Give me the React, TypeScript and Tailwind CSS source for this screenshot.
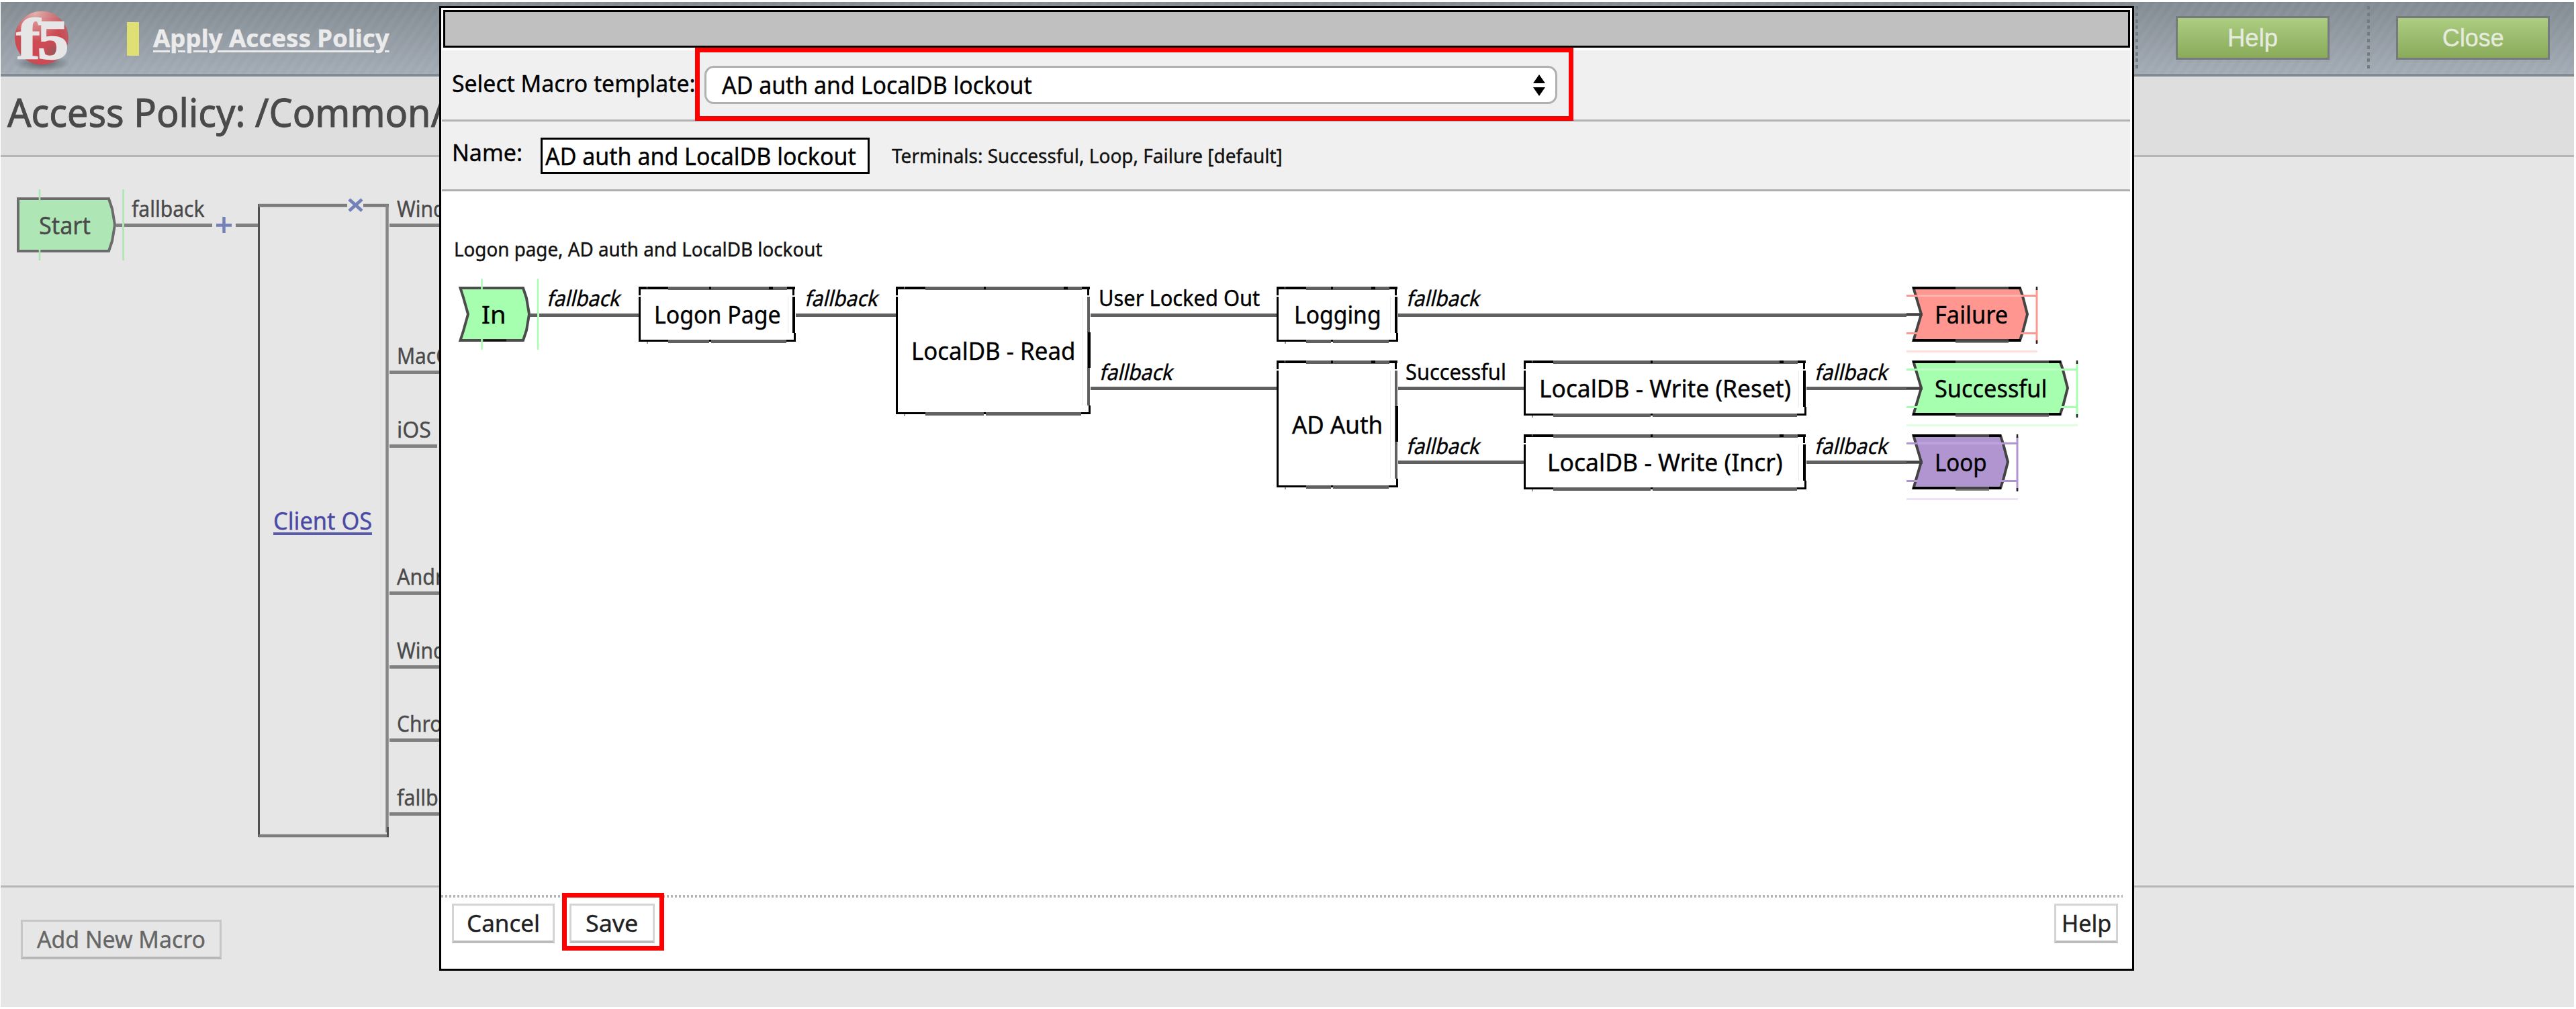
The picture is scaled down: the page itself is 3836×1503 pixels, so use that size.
import { useLayoutEffect, useRef, useState } from "react";
import type { ReactNode } from "react";

/* Text drawn in one line and condensed or stretched to the given width. */
function Fit({ w, children, oblique = false, className = "" }: { w: number; children: string; oblique?: boolean; className?: string }) {
  const ref = useRef<HTMLSpanElement>(null);
  const [scale, setScale] = useState(1);
  useLayoutEffect(() => {
    if (ref.current) setScale(w / ref.current.offsetWidth);
  }, [w, children]);
  return (
    <span className="inline-block whitespace-nowrap" style={{ width: w }}>
      <span
        ref={ref}
        className={`inline-block origin-[0_78%] ${className}`}
        style={{ transform: `scaleX(${scale})${oblique ? " skewX(-14deg)" : ""}` }}
      >
        {children}
      </span>
    </span>
  );
}

/* Label on a diagram canvas, placed by its left edge and baseline. */
function Label({ x, b, w, children, oblique }: { x: number; b: number; w: number; children: string; oblique?: boolean }) {
  return (
    <div className="absolute text-[32px] leading-[40px]" style={{ left: x, top: b - 32 }}>
      <Fit w={w} oblique={oblique}>{children}</Fit>
    </div>
  );
}

function Wire({ x, y, w }: { x: number; y: number; w: number }) {
  return <div className="absolute h-[5px] bg-[#606060]" style={{ left: x, top: y - 2.5, width: w }} />;
}

function BoxNode({ x, y, w, h, tw, children }: { x: number; y: number; w: number; h: number; tw: number; children: string }) {
  const mid = Math.round(w * 0.45);
  const tall = h > 120;
  return (
    <div className="absolute flex items-center justify-center bg-white pt-[2px] text-[36px] leading-[48px]" style={{ left: x, top: y, width: w, height: h }}>
      <svg className="absolute left-0 top-0 overflow-visible" width={w} height={h} shapeRendering="crispEdges">
        <rect x={0} y={0} width={3} height={h} fill="#000" />
        <rect x={0} y={0} width={w - 1} height={4} fill="#000" />
        <rect x={44} y={0} width={w - 57} height={5} fill="#606060" />
        <rect x={mid} y={0} width={3} height={4} fill="#000" />
        <rect x={w - 40} y={0} width={6} height={4} fill="#000" />
        <rect x={12} y={0} width={1} height={3} fill="#aaa" />
        <rect x={0} y={h - 3} width={w} height={3} fill="#000" />
        <rect x={44} y={h - 3} width={w - 58} height={5} fill="#606060" />
        <rect x={mid} y={h - 3} width={3} height={3} fill="#000" />
        <rect x={mid} y={h} width={3} height={2} fill="#fff" />
        <rect x={12} y={h} width={2} height={3} fill="#999" />
        <rect x={w - 5} y={0} width={3} height={13} fill="#000" />
        <rect x={w - 5} y={15} width={4} height={h - 28} fill={tall ? "#606060" : "#000"} />
        {tall && <rect x={w - 4} y={68} width={4} height={53} fill="#000" />}
        <rect x={w - 3} y={h - 13} width={3} height={13} fill="#000" />
        <rect x={0} y={13} width={3} height={2} fill="#fff" />
        <rect x={w - 12} y={15} width={1} height={h - 28} fill="#e8e8e8" />
      </svg>
      <Fit w={tw}>{children}</Fit>
    </div>
  );
}

function Ending({ x, y, w, tw, fill, soft, light, children }: { x: number; y: number; w: number; tw: number; fill: string; soft: string; light: string; children: string }) {
  const r = w - 12;
  return (
    <div className="absolute flex h-[82px] items-center pl-[33px] pt-[2px] text-[36px] leading-[48px]" style={{ left: x, top: y, width: w }}>
      <svg className="absolute left-0 top-0 overflow-visible" width={w} height={82}>
        <path d={`M1.5 2 H${r - 1} L${r + 3} 14 L${w - 2} 41 L${r + 3} 68 L${r - 1} 80 H1.5 L5 68 L13 41 L5 14 Z`} fill={fill} stroke="#444" strokeWidth={4} />
        <path d={`M0 2 H64 M${r - 18} 2 H${r} M0 80 H64 M${r - 18} 80 H${r}`} stroke="#000" strokeWidth={4} />
        <path d={`M64 83 H${r - 18}`} stroke="#888" strokeWidth={2} />
        <path d={`M-9 13.500 H${w + 13} M-9 69.500 H${w + 13} M${w + 12} 3 V84`} stroke={fill} strokeWidth={3} />
        <path d={`M8 13.500 H${w - 10}`} stroke={light} strokeWidth={3} />
        <path d={`M-9 96.500 H${w + 13}`} stroke={soft} strokeWidth={3} />
        <path d={`M${w + 12} 0 V5 M${w + 12} 80 V85`} stroke="#222" strokeWidth={2.5} />
        <path d="M-9 41.500 H15" stroke="#444" strokeWidth={4.5} />
      </svg>
      <span className="relative flex">
        <Fit w={tw}>{children}</Fit>
      </span>
    </div>
  );
}

function GreyButton({ children, className }: { children: ReactNode; className: string }) {
  return (
    <button className={`flex h-[59px] shrink-0 items-center justify-center border-[3px] border-b-4 text-[35px] leading-[48px] ${className}`}>
      {children}
    </button>
  );
}

function HeaderButton({ w, children }: { w: number; children: string }) {
  return (
    <button className="flex h-[65px] w-[229px] items-center justify-center border-[3px] border-[#777a7c] bg-linear-to-b from-[#adcd82] to-[#89ab59] font-['Liberation_Sans',sans-serif] text-[37px] leading-[44px] text-[#e6ebdf]">
      <Fit w={w}>{children}</Fit>
    </button>
  );
}

function DottedRule() {
  return <div className="h-[96px] w-[4px] bg-[repeating-linear-gradient(180deg,#737b83_0_5px,transparent_5px_9.8px)]" />;
}

function Logo() {
  return (
    <svg className="h-[104px] w-[90px] overflow-visible" viewBox="0 0 90 104">
      <defs>
        <radialGradient id="ball" cx="0.45" cy="0.55" r="0.6">
          <stop offset="0" stopColor="#cf4a55" />
          <stop offset="0.7" stopColor="#cb4a54" />
          <stop offset="1" stopColor="#b8636a" />
        </radialGradient>
        <radialGradient id="gloss" cx="0.38" cy="0.02" r="0.55">
          <stop offset="0" stopColor="#e2b5b0" />
          <stop offset="0.5" stopColor="#dba09f" stopOpacity="0.6" />
          <stop offset="1" stopColor="#dba6a5" stopOpacity="0" />
        </radialGradient>
        <radialGradient id="dim">
          <stop offset="0" stopColor="#8c5a5c" stopOpacity="0.8" />
          <stop offset="1" stopColor="#8c5a5c" stopOpacity="0" />
        </radialGradient>
        <radialGradient id="shade">
          <stop offset="0" stopColor="#555b62" stopOpacity="0.9" />
          <stop offset="1" stopColor="#555b62" stopOpacity="0" />
        </radialGradient>
      </defs>
      <ellipse cx="45" cy="91" rx="42" ry="12" fill="url(#shade)" />
      <circle cx="44" cy="53.500" r="40" fill="url(#ball)" />
      <circle cx="44" cy="53.500" r="40" fill="url(#gloss)" />
      <ellipse cx="62" cy="74" rx="16" ry="13" fill="url(#dim)" />
      <g fill="#e7e6e6" stroke="#e7e6e6" className="font-['Liberation_Serif',serif] font-bold">
        <text x="6" y="85" fontSize="86" strokeWidth="1.5" textLength="36" lengthAdjust="spacingAndGlyphs">f</text>
        <text x="38" y="84" fontSize="82" strokeWidth="2.500" textLength="46" lengthAdjust="spacingAndGlyphs">5</text>
      </g>
    </svg>
  );
}

const branches = [
  { name: "Windows", h: "h-[103.5px]", w: 128, line: "w-[77px]" },
  { name: "MacOS", h: "h-[219.5px]", w: 98, line: "w-[77px]" },
  { name: "iOS", h: "h-[109.5px]", w: 51, line: "w-[71px]" },
  { name: "Android", h: "h-[219.5px]", w: 114, line: "w-[77px]" },
  { name: "Windows", h: "h-[109.5px]", w: 128, line: "w-[77px]" },
  { name: "Chrome OS", h: "h-[109.5px]", w: 160, line: "w-[77px]" },
  { name: "fallback", h: "h-[110px]", w: 110, line: "w-[77px]" },
];

/* Policy diagram behind the dialog. */
function PolicyCanvas() {
  return (
    <div className="relative flex text-[#4a4a4a]">
      <svg className="absolute -left-[1px] -top-[234px] overflow-visible" width={660} height={1300}>
        <path d="M27 296 H162 L167 311 L171 335 L167 359 L162 374 H27 Z" fill="#afe6b6" stroke="#6c6c6c" strokeWidth={4} />
        <path d="M59 282 V300 M59 371 V388 M183.500 282 V388" stroke="#a9e6b0" strokeWidth={2.500} />
        <path d="M173 335.500 H182 M185 335.500 H316 M351 335.500 H385" stroke="#808080" strokeWidth={5} />
        <path d="M322 335.500 H345 M333.500 323 V347" stroke="#7481b8" strokeWidth={4.500} />
        <path d="M385.500 304 V1247" stroke="#505050" strokeWidth={3} />
        <path d="M385 306 H517 M541 306 H579 M385 1245 H579" stroke="#7c7c7c" strokeWidth={4.500} />
        <path d="M576.500 306 V1240" stroke="#868686" strokeWidth={4.500} />
        <path d="M577.500 1232 V1247" stroke="#505050" strokeWidth={3} />
        <path d="M567 312 V1232" stroke="#dedede" strokeWidth={1.500} />
        <path d="M520 297 L539 314 M539 297 L520 314" stroke="#7481b8" strokeWidth={5} />
      </svg>
      <div className="relative flex w-[384px] pl-[57px]">
        <div className="mt-[78px] w-[138px] text-[36px] leading-[48px]">
          <Fit w={77}>Start</Fit>
        </div>
        <div className="mt-[57px] text-[32px] leading-[40px]">
          <Fit w={109}>fallback</Fit>
        </div>
      </div>
      <div className="relative mt-[518px] h-[45px] w-[195px] pl-[22px] text-[36px] leading-[48px] text-[#4a4aa6]">
        <div className="h-[45px] w-[147px] border-b-[4px] border-[#5b5bac]">
          <Fit w={147}>Client OS</Fit>
        </div>
      </div>
      <div className="relative flex flex-col text-[32px] leading-[40px]">
        {branches.map((br, i) => (
          <div key={i} className={`flex flex-col justify-end ${br.h}`}>
            <div className="mb-[2px] h-[40px] pl-[11px]">
              <Fit w={br.w}>{br.name}</Fit>
            </div>
            <div className={`h-[5px] bg-[#808080] ${br.line}`} />
          </div>
        ))}
      </div>
    </div>
  );
}

/* Macro diagram; the canvas origin is the page's top left corner. */
function MacroPreview() {
  return (
    <div className="absolute -left-[657px] -top-[285px]">
      <svg className="absolute left-0 top-0 overflow-visible" width={900} height={600}>
        <path d="M685.500 429 H779 L784 444 L788 468 L784 492 L779 507 H685.500 L690 493 L697 468 L690 443 Z" fill="#a5ffaf" stroke="#4c4c4c" strokeWidth={4} />
        <path d="M717.500 415 V432 M717.500 504 V521 M801 415 V521" stroke="#a5ffaf" strokeWidth={2.500} />
        <path d="M720 507 H754" stroke="#111" strokeWidth={3} />
      </svg>
      <div className="absolute left-[717px] top-[445px] text-[36px] leading-[48px]">
        <Fit w={36}>In</Fit>
      </div>
      <Wire x={789} y={469} w={11} />
      <Wire x={803} y={469} w={148} />
      <Wire x={1185} y={469} w={150} />
      <Wire x={1624} y={469} w={278} />
      <Wire x={1624} y={578.5} w={278} />
      <Wire x={2082} y={469} w={757} />
      <Wire x={2082} y={578.5} w={188} />
      <Wire x={2082} y={688} w={188} />
      <Wire x={2690} y={578.5} w={149} />
      <Wire x={2690} y={688} w={149} />

      <Label x={814} b={456} w={109} oblique>fallback</Label>
      <Label x={1198} b={456} w={109} oblique>fallback</Label>
      <Label x={1636} b={456} w={240}>User Locked Out</Label>
      <Label x={1637} b={566} w={109} oblique>fallback</Label>
      <Label x={2094} b={456} w={109} oblique>fallback</Label>
      <Label x={2093} b={566} w={150}>Successful</Label>
      <Label x={2094} b={675.5} w={109} oblique>fallback</Label>
      <Label x={2702} b={566} w={109} oblique>fallback</Label>
      <Label x={2702} b={675.5} w={109} oblique>fallback</Label>

      <BoxNode x={951} y={427} w={234} h={82} tw={189}>Logon Page</BoxNode>
      <BoxNode x={1334} y={427} w={290} h={190} tw={244}>LocalDB - Read</BoxNode>
      <BoxNode x={1901} y={427} w={181} h={82} tw={130}>Logging</BoxNode>
      <BoxNode x={1901} y={537} w={181} h={189} tw={135}>AD Auth</BoxNode>
      <BoxNode x={2269} y={537} w={421} h={82} tw={375}>LocalDB - Write (Reset)</BoxNode>
      <BoxNode x={2269} y={647} w={421} h={82} tw={351}>LocalDB - Write (Incr)</BoxNode>

      <Ending x={2848} y={427} w={173} tw={109} fill="#ff9790" soft="#ffdedb" light="#ffb4af">Failure</Ending>
      <Ending x={2848} y={537} w={233} tw={167} fill="#a5ffaf" soft="#ddffe2" light="#bdffc5">Successful</Ending>
      <Ending x={2848} y={646.5} w={144} tw={78} fill="#b095d0" soft="#ece4f6" light="#c0a4e0">Loop</Ending>
    </div>
  );
}

function MacroDialog() {
  return (
    <div className="absolute left-[654px] top-[9px] flex h-[1437px] w-[2524px] flex-col border-[3px] border-black bg-white text-black">
      <div className="mx-[3px] mb-[4px] mt-[3px] h-[56px] shrink-0 border-[3px] border-black bg-[#c0c0c0]" />
      <div className="ml-[1px] mr-[3px] flex h-[106px] shrink-0 items-center border-b-[3px] border-[#b0b0b0] bg-[#f0f0f0] pl-[15px]">
        <div className="w-[363px] pb-[5px] text-[35px] leading-[48px]">
          <Fit w={363}>Select Macro template:</Fit>
        </div>
        <div className="-ml-[1px] -mt-[2px] flex h-[109px] w-[1308px] items-center border-[7px] border-[#ff0000] px-[7px] pt-[2px]">
          <div className="flex h-[57px] w-[1270px] items-center justify-between rounded-[14px] border-[3px] border-[#b0b0b0] bg-white pl-[23px] pr-[15px] text-[36px] leading-[48px]">
            <Fit w={462}>AD auth and LocalDB lockout</Fit>
            <svg width={18} height={32} viewBox="0 0 18 32">
              <path d="M9 0 L18 13 H0 Z M0 19 H18 L9 32 Z" fill="#000" />
            </svg>
          </div>
        </div>
      </div>
      <div className="ml-[1px] mr-[3px] flex h-[104px] shrink-0 items-center border-b-[3px] border-[#adadad] bg-[#f0f0f0] pl-[15px]">
        <div className="w-[132px] pb-[10px] text-[35px] leading-[48px]">
          <Fit w={105}>Name:</Fit>
        </div>
        <div className="flex h-[54px] w-[490px] items-center border-[3px] border-black bg-white pl-[4px] pt-[2px] text-[36px] leading-[48px]">
          <Fit w={463}>AD auth and LocalDB lockout</Fit>
        </div>
        <div className="ml-[33px] text-[29px] leading-[40px] text-[#111]">
          <Fit w={582}>Terminals: Successful, Loop, Failure [default]</Fit>
        </div>
      </div>
      <div className="relative min-h-0 flex-1 pl-[19px] pt-[66px]">
        <div className="text-[29px] leading-[40px] text-[#111]">
          <Fit w={548}>Logon page, AD auth and LocalDB lockout</Fit>
        </div>
        <MacroPreview />
      </div>
      <div className="mr-[14px] h-[4px] shrink-0 bg-[repeating-linear-gradient(90deg,#b4b4b4_0_3px,transparent_3px_6px)]" />
      <div className="relative flex h-[106px] shrink-0 items-start pl-[16px] pr-[21px]">
        <GreyButton className="mt-[9px] w-[153px] border-[#d4d4d4] border-b-[#bcbcbc] bg-white text-[#222]">
          <Fit w={109}>Cancel</Fit>
        </GreyButton>
        <div className="-mt-[7px] ml-[11px] flex h-[86px] w-[152px] shrink-0 items-center border-[7px] border-[#ff0000] pl-[4px] pt-[4px]">
          <GreyButton className="w-[127px] border-[#d4d4d4] border-b-[#bcbcbc] bg-white pr-[2px] text-[#222]">
            <Fit w={78}>Save</Fit>
          </GreyButton>
        </div>
        <GreyButton className="ml-auto mt-[9px] w-[95px] border-[#d4d4d4] border-b-[#bcbcbc] bg-white text-[#222]">
          <Fit w={74}>Help</Fit>
        </GreyButton>
      </div>
    </div>
  );
}

export default function App() {
  return (
    <div className="relative h-[1503px] w-[3836px] overflow-hidden bg-white pb-[3px] pl-[1px] pr-[3px] pt-[3px] font-['Noto_Sans',sans-serif] [-webkit-text-stroke:0.4px]">
      <div className="flex h-full flex-col bg-[#e6e6e6]">
        <header className="flex h-[111px] shrink-0 border-b-4 border-[#828a92] bg-[repeating-linear-gradient(125deg,rgba(255,255,255,0.035)_0_6px,transparent_6px_12px),linear-gradient(180deg,#828a92,#a3abb4)] pl-[17px] pr-[36px]">
          <Logo />
          <div className="ml-[81px] mt-[30px] h-[50px] w-[18px] bg-[#dfdf74]" />
          <div className="ml-[21px] mt-[32px] text-[36px] font-bold leading-[44px] text-[#ebebeb]">
            <Fit w={352} className="underline decoration-[3px] underline-offset-[5px]">Apply Access Policy</Fit>
          </div>
          <div className="ml-auto flex gap-[56px] pt-[6px]">
            <DottedRule />
            <div className="pt-[15px]"><HeaderButton w={75}>Help</HeaderButton></div>
            <DottedRule />
            <div className="-ml-[17px] pt-[15px]"><HeaderButton w={92}>Close</HeaderButton></div>
          </div>
        </header>
        <div className="h-[120px] shrink-0 border-b-[3px] border-[#b6b6b6] bg-[#dedede] pl-[10px] pt-[12px] text-[59px] leading-[80px] text-[#4a4a4a] [-webkit-text-stroke:1px]">
          <Fit w={651}>Access Policy: /Common/</Fit>
        </div>
        <div className="relative h-[1088px] shrink-0 border-b-[3px] border-[#b5b5b5]">
          <PolicyCanvas />
        </div>
        <div className="px-[30px] pt-[48px]">
          <GreyButton className="w-[299px] border-[#c6c6c6] border-b-[#b8b8b8] text-[#666]">
            <Fit w={251}>Add New Macro</Fit>
          </GreyButton>
        </div>
      </div>
      <MacroDialog />
    </div>
  );
}
